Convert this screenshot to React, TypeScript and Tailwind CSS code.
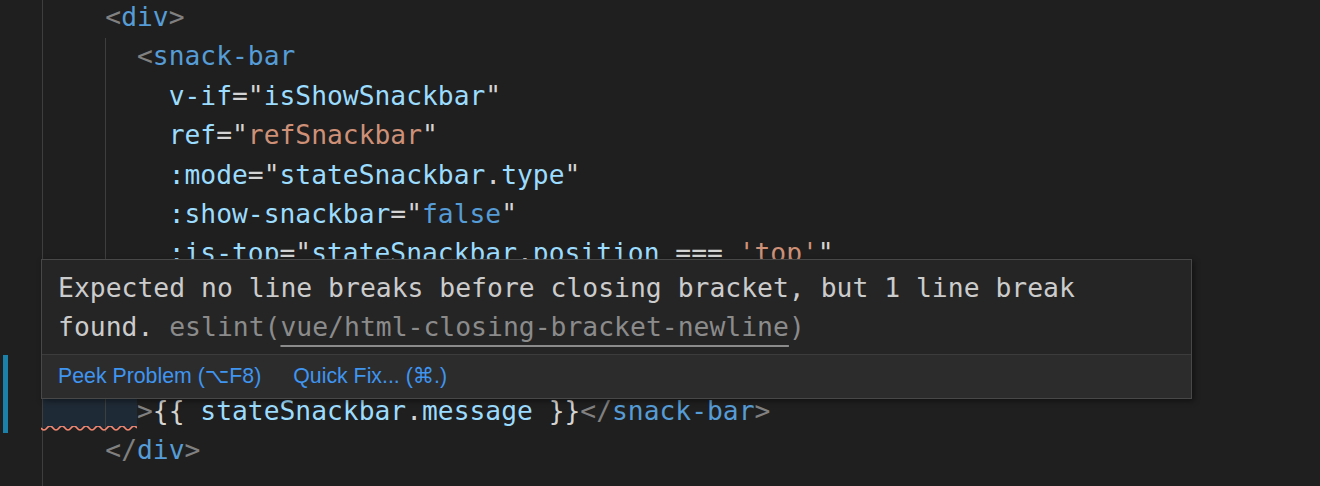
import React from "react";

type Tok = [string, string];

const C = {
  br: "text-[#808080]",
  tag: "text-[#569cd6]",
  attr: "text-[#9cdcfe]",
  pun: "text-[#d4d4d4]",
  str: "text-[#ce9178]",
  kw: "text-[#569cd6]",
};

// lines 7-9 sit under the hover card, so they are left blank
const lines: Tok[][] = [
  [["    ", C.pun], ["<", C.br], ["div", C.tag], [">", C.br]],
  [["      ", C.pun], ["<", C.br], ["snack-bar", C.tag]],
  [["        ", C.pun], ["v-if", C.attr], ["=\"", C.pun], ["isShowSnackbar", C.attr], ["\"", C.pun]],
  [["        ", C.pun], ["ref", C.attr], ["=\"", C.pun], ["refSnackbar", C.str], ["\"", C.pun]],
  [["        ", C.pun], [":mode", C.attr], ["=\"", C.pun], ["stateSnackbar", C.attr], [".", C.pun], ["type", C.attr], ["\"", C.pun]],
  [["        ", C.pun], [":show-snackbar", C.attr], ["=\"", C.pun], ["false", C.kw], ["\"", C.pun]],
  [
    ["        ", C.pun],
    [":is-top", C.attr],
    ["=\"", C.pun],
    ["stateSnackbar", C.attr],
    [".", C.pun],
    ["position", C.attr],
    [" === ", C.pun],
    ["'top'", C.str],
    ["\"", C.pun],
  ],
  [],
  [],
  [],
  [
    ["      ", C.pun],
    [">", C.br],
    ["{{ ", C.pun],
    ["stateSnackbar", C.attr],
    [".", C.pun],
    ["message", C.attr],
    [" }}", C.pun],
    ["</", C.br],
    ["snack-bar", C.tag],
    [">", C.br],
  ],
  [["    ", C.pun], ["</", C.br], ["div", C.tag], [">", C.br]],
];

const mono = "font-['DejaVu_Sans_Mono','Liberation_Mono',monospace]";

const Squiggle = () => (
  <svg width="96" height="7" viewBox="0 0 96 7" className="absolute left-[41px] top-[426px]">
    <path
      d="M0 2 Q3 6 6 2 T12 2 T18 2 T24 2 T30 2 T36 2 T42 2 T48 2 T54 2 T60 2 T66 2 T72 2 T78 2 T84 2 T90 2 T96 2"
      fill="none"
      stroke="#f48771"
      strokeWidth="1.7"
    />
  </svg>
);

const HoverCard = () => (
  <div className="absolute left-[41px] top-[259px] w-[1151px] border border-[#484848] bg-[#252526] shadow-[2px_2px_6px_rgba(0,0,0,0.45)]">
    <div className={`${mono} text-[26.4px] leading-[39px] text-[#cccccc] whitespace-pre pl-4 pt-2 pb-[8px]`}>
      <div>Expected no line breaks before closing bracket, but 1 line break</div>
      <div>
        found.<span className="text-[#8b8b8b]"> eslint(</span>
        <span className="text-[#8b8b8b] underline decoration-[1.5px] decoration-[#8b8b8b] underline-offset-[9px]">
          vue/html-closing-bracket-newline
        </span>
        <span className="text-[#8b8b8b]">)</span>
      </div>
    </div>
    <div className="flex items-center gap-[32px] h-[44px] pl-4 border-t border-[#3c3c3c] bg-[#2c2c2d] font-['Liberation_Sans','DejaVu_Sans',sans-serif] text-[21.3px] text-[#3f95f0]">
      <span>Peek Problem (⌥F8)</span>
      <span>Quick Fix... (⌘.)</span>
    </div>
  </div>
);

export default function App() {
  return (
    <div className="relative w-[1320px] h-[486px] overflow-hidden bg-[#1f1f1f]">
      {/* git change marker */}
      <div className="absolute left-[3px] top-[355px] w-[5px] h-[78px] bg-[#1b81a8]" />
      {/* range highlight on the broken line */}
      <div className="absolute left-[42px] top-[394px] w-[95px] h-[34px] bg-[#1e2a36]" />
      {/* indent guides */}
      <div className="absolute left-[42px] top-0 w-px h-full bg-[#3e3e3e]" />
      <div className="absolute left-[105px] top-[38px] w-px h-[394px] bg-[#3e3e3e]" />

      <div className={`relative flex flex-col pl-[42px] mt-[-2px] ${mono} text-[26.3px] leading-[39.4px]`}>
        {lines.map((toks, i) => (
          <div key={i} className="h-[39.4px] whitespace-pre">
            {toks.map(([t, c], j) => (
              <span key={j} className={c}>
                {t}
              </span>
            ))}
          </div>
        ))}
      </div>

      <Squiggle />
      <HoverCard />
    </div>
  );
}
